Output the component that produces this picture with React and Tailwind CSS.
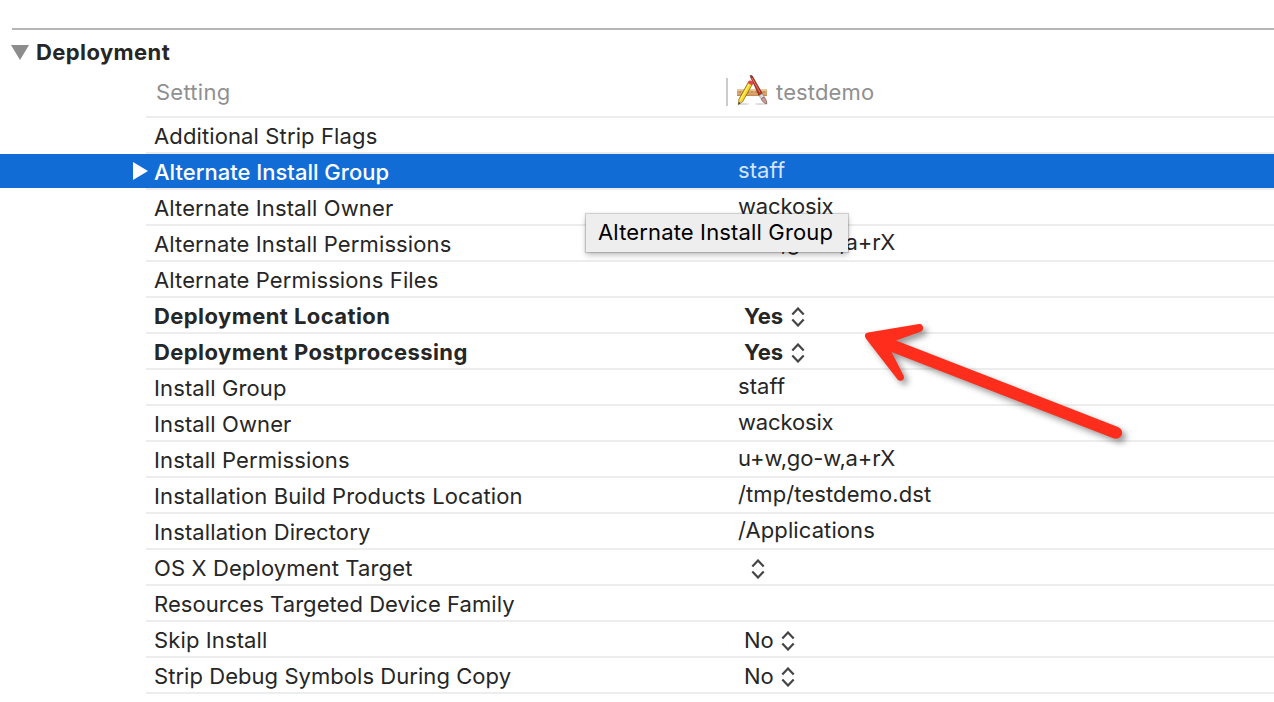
import React from 'react';

const rows = [
  { name: 'Additional Strip Flags' },
  { name: 'Alternate Install Group', value: 'staff', selected: true },
  { name: 'Alternate Install Owner', value: 'wackosix', tight: true },
  { name: 'Alternate Install Permissions', value: 'u+w,go-w,a+rX', tight: true },
  { name: 'Alternate Permissions Files' },
  { name: 'Deployment Location', value: 'Yes', popup: true, bold: true },
  { name: 'Deployment Postprocessing', value: 'Yes', popup: true, bold: true },
  { name: 'Install Group', value: 'staff' },
  { name: 'Install Owner', value: 'wackosix', tight: true },
  { name: 'Install Permissions', value: 'u+w,go-w,a+rX', tight: true },
  { name: 'Installation Build Products Location', value: '/tmp/testdemo.dst' },
  { name: 'Installation Directory', value: '/Applications' },
  { name: 'OS X Deployment Target', value: '', popup: true },
  { name: 'Resources Targeted Device Family', narrow: true },
  { name: 'Skip Install', value: 'No', popup: true },
  { name: 'Strip Debug Symbols During Copy', value: 'No', popup: true, narrow: true },
];

function Stepper() {
  return (
    <svg className="mt-1 h-5 w-3.5 shrink-0" viewBox="0 0 14 20" fill="none" stroke="#454545" strokeWidth="2.200">
      <path d="M1.300 7.500 7 1.500l5.700 6M1.300 12.500 7 18.500l5.700-6" />
    </svg>
  );
}

function AppIcon() {
  return (
    <svg className="h-8 w-8 shrink-0" viewBox="0 0 32 32">
      <ellipse cx="7" cy="29" rx="6" ry="1" fill="#ddd" />
      <ellipse cx="25" cy="29" rx="6" ry="1" fill="#ddd" />
      <path d="M1 14.500h30V21H1z" fill="#d9a470" />
      <path d="M1 14.500h30V16H1z" fill="#e9c08f" />
      <path d="M1 19.800h30V21H1z" fill="#c78b57" />
      <path d="M4 16v2M8 16v2M12 16v2M16 16v2M20 16v2M24 16v2M28 16v2" stroke="#9d6536" strokeWidth=".6" />
      <path d="M14 .8c.6-.8 1.600-.7 2.200 0L26.300 18.500l-3.300 2z" fill="#b5331f" stroke="#5e1e16" strokeWidth=".6" />
      <path d="m16 3 8 14.500" stroke="#ee755e" strokeWidth="1" />
      <path d="m23 20.500 3.300-2 2 3.500-3.100 1.800z" fill="#d6d6d6" stroke="#777" strokeWidth=".5" />
      <path d="m25.200 23.800 3.100-1.800c1.600 2 2.600 4.300 2.400 7-2.500-.7-4.500-2.500-5.500-5.200z" fill="#c99c8c" stroke="#6b4a42" strokeWidth=".6" />
      <path d="m13 6 4 2.200L6.500 26.800l-4 2.700.2-4.900z" fill="#fadb22" stroke="#6c5415" strokeWidth=".7" />
      <path d="M13 9.500 4.300 24.800" stroke="#fff49a" strokeWidth=".9" />
      <path d="M13 6c.8-1.500 4.700.4 4 2.200l-1.200 2-4-2.200z" fill="#e04450" />
      <path d="m2.600 24.900 3.600 2-3.700 2.600z" fill="#e3bd87" />
      <path d="m2.600 27-.1 2.500 2-1.400z" fill="#222" />
    </svg>
  );
}

function Row({ name, value, popup, bold, selected, tight, narrow }) {
  const nameStyle = bold
    ? 'font-bold tracking-[0.42px]'
    : selected
      ? 'font-medium'
      : narrow
        ? 'tracking-[0.05px]'
        : 'tracking-[0.12px]';
  const valueStyle = (selected ? 'text-[#d4e5fa] ' : '') + (tight ? 'tracking-[-0.15px]' : 'tracking-[0.1px]');
  return (
    <div className={selected ? 'bg-[#116cd6]' : ''}>
      <div className={'flex h-[34px] items-center pl-[133px] ' + (selected ? 'text-white' : 'text-[#262626]')}>
        <div className="w-[21px] shrink-0">
          {selected && (
            <svg className="h-[18px] w-[15px]" viewBox="0 0 15 18">
              <path d="M0 0v18l15-9z" fill="white" />
            </svg>
          )}
        </div>
        <div className={'w-[584px] shrink-0 pt-0.5 ' + nameStyle}>{name}</div>
        {popup ? (
          <div className={'flex items-center pl-1.5 ' + (bold ? 'gap-2 font-bold' : 'gap-[7px]')}>
            {value ? <span className="pt-0.5">{value}</span> : <span />}
            <Stepper />
          </div>
        ) : (
          <div className={'-mt-0.5 ' + valueStyle}>{value}</div>
        )}
      </div>
    </div>
  );
}

export default function App() {
  return (
    <div className="relative h-[702px] w-[1274px] overflow-hidden bg-white font-['Inter',sans-serif] text-[22px] leading-[28px] whitespace-nowrap">
      <div className="ml-3 mt-7 h-0.5 bg-[#b5b5b5]" />
      <div className="flex h-[44px] items-center pl-[11px] text-[#262626]">
        <svg className="mr-[7px] h-[15px] w-[18px] shrink-0" viewBox="0 0 18 15">
          <path d="M0 0h18L9 15z" fill="#8c8c8c" />
        </svg>
        <h2 className="font-bold tracking-[0.4px]">Deployment</h2>
      </div>
      <div className="flex h-[42px] pl-[156px] text-[#909090]">
        <div className="w-[570px] pt-1 tracking-[0.25px]">Setting</div>
        <div className="mt-1 h-7 w-0.5 bg-[#cbcbcb]" />
        <div className="ml-2 pt-px"><AppIcon /></div>
        <div className="ml-2 pt-1 tracking-[0.15px]">testdemo</div>
      </div>
      <div className="ml-[146px] h-0.5 bg-[#ededed]" />
      {rows.map((row) => (
        <React.Fragment key={row.name}>
          <Row {...row} />
          <div className="ml-[146px] h-0.5 bg-[#ededed]" />
        </React.Fragment>
      ))}
      <div className="absolute left-[586px] top-[214px] flex h-[38px] w-[262px] items-center bg-[#eee] pb-0.5 pl-3 tracking-[0.15px] text-black shadow-[0_0_1px_1px_rgba(0,0,0,0.16),0_3px_6px_rgba(0,0,0,0.25)]">
        Alternate Install Group
      </div>
      <svg className="absolute left-[850px] top-[310px] h-[150px] w-[300px] drop-shadow-[4px_4px_3px_rgba(0,0,0,0.4)]" viewBox="0 0 300 150">
        <path d="M18 22.500 69 14c4.500-.5 5.800 6.200 1.500 7.800L46 30.500 268 117c7.500 3.500 4 13-4 11.500L41.500 42 53.500 65.500c2.300 5-4 7.300-6.500 3.200L15.800 28.500c-1.700-2.800-.8-5.600 2.200-6z" fill="#ff2d1c" />
      </svg>
    </div>
  );
}
